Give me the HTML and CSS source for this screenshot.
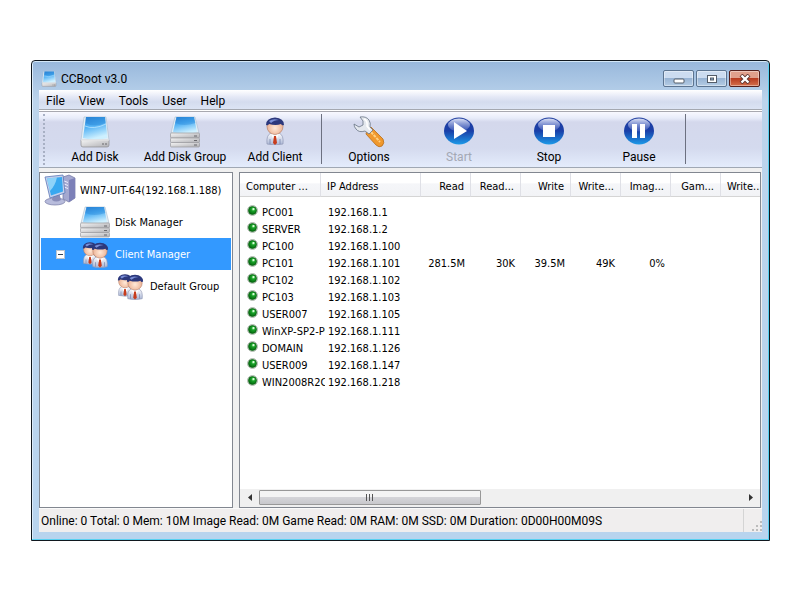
FILE: index.html
```
<!DOCTYPE html>
<html lang="en">
<head>
    <meta charset="utf-8">
    <title>CCBoot v3.0</title>
    <link rel="stylesheet" href="styles.css">
</head>
<body>
    <!-- shared icons -->
    <svg class="defs" width="0" height="0" aria-hidden="true">
        <defs>
            <linearGradient id="glass" x1="0" y1="0" x2="0.3" y2="1">
                <stop offset="0" stop-color="#2b84d8"/>
                <stop offset="0.45" stop-color="#4fb0f4"/>
                <stop offset="1" stop-color="#cdf0ff"/>
            </linearGradient>
            <linearGradient id="metal" x1="0" y1="0" x2="1" y2="1">
                <stop offset="0" stop-color="#f4f4f4"/>
                <stop offset="1" stop-color="#b0b0b4"/>
            </linearGradient>
            <linearGradient id="ball" x1="0" y1="0" x2="0" y2="1">
                <stop offset="0" stop-color="#2440a0"/>
                <stop offset="0.5" stop-color="#1a3fa8"/>
                <stop offset="1" stop-color="#1c9ae8"/>
            </linearGradient>
            <linearGradient id="shine" x1="0" y1="0" x2="0" y2="1">
                <stop offset="0" stop-color="#f0f4ff" stop-opacity="0.9"/>
                <stop offset="1" stop-color="#8090d8" stop-opacity="0.3"/>
            </linearGradient>
            <radialGradient id="face" cx="0.5" cy="0.6" r="0.6">
                <stop offset="0" stop-color="#ffe9d8"/>
                <stop offset="1" stop-color="#e8a888"/>
            </radialGradient>
            <linearGradient id="shirt" x1="0" y1="0" x2="0" y2="1">
                <stop offset="0" stop-color="#ffffff"/>
                <stop offset="1" stop-color="#a8b4d4"/>
            </linearGradient>
            <radialGradient id="led" cx="0.6" cy="0.35" r="0.6">
                <stop offset="0" stop-color="#a0f0a0"/>
                <stop offset="0.4" stop-color="#18a028"/>
                <stop offset="1" stop-color="#067010"/>
            </radialGradient>
            <symbol id="disk" viewBox="0 0 32 32">
                <path d="M5 1H27L30 24H2Z" fill="#e4eef6" stroke="#a8bccc" stroke-width="0.6"/>
                <path d="M7 1H26L28.500 22Q16 25 4 22Z" fill="url(#glass)"/>
                <path d="M6.500 7Q16 12 26.500 7L26 1H7Z" fill="#1c78cc" opacity="0.35"/>
                <path d="M6 10Q15 14 27 8" fill="none" stroke="#b8e4ff" stroke-width="0.8"/>
                <path d="M2 24H30V29Q30 31 28 31H4Q2 31 2 29Z" fill="url(#metal)" stroke="#8c8c90" stroke-width="0.7"/>
                <path d="M2 24H30" stroke="#fff"/>
                <path d="M24 27V29M27 27V29" stroke="#68686c"/>
            </symbol>
            <symbol id="disks" viewBox="0 0 32 32">
                <path d="M6 1H26L30 17H2Z" fill="#e4eef6" stroke="#a8bccc" stroke-width="0.6"/>
                <path d="M7.500 1H25L28 16Q16 20 4 16Z" fill="url(#glass)"/>
                <path d="M6 7Q15 11 26.500 7L25 1H7.500Z" fill="#1c78cc" opacity="0.3"/>
                <rect x="1.500" y="17" width="29" height="5" rx="1" fill="url(#metal)" stroke="#98989c" stroke-width="0.7"/>
                <rect x="1.500" y="22" width="29" height="4.500" rx="1" fill="url(#metal)" stroke="#98989c" stroke-width="0.7"/>
                <rect x="1.500" y="26.500" width="29" height="4.500" rx="1" fill="url(#metal)" stroke="#98989c" stroke-width="0.7"/>
                <path d="M25 20H28M25 24.500H28M25 29H28" stroke="#68686c"/>
            </symbol>
            <symbol id="user" viewBox="0 0 20 28">
                <path d="M2 27Q1 18 6 16H14Q19 18 18 27Q10 29 2 27Z" fill="url(#shirt)" stroke="#9098b4" stroke-width="0.7"/>
                <path d="M5 27V22M15 27V22" stroke="#7c88ac" stroke-width="0.8"/>
                <circle cx="10" cy="9.500" r="8" fill="url(#face)" stroke="#b07860" stroke-width="0.6"/>
                <path d="M1 8Q1 1 10 0.500Q19 1 19 8Q17 9 16 7Q11 9 4 7Q3 9 1 8Z" fill="#2c387c"/>
                <path d="M4 4Q8 1 14 3Q9 3 6 6Z" fill="#7c90d8"/>
                <path d="M6.500 17L10 19L13.500 17L12 22L10 20L8 22Z" fill="#fff"/>
                <path d="M9 19H11L12 26L10 28L8 26Z" fill="#c83c1c"/>
            </symbol>
            <symbol id="users" viewBox="0 0 32 32">
                <use href="#user" x="3" y="3" width="16" height="24"/>
                <use href="#user" x="12" y="4" width="18" height="26"/>
            </symbol>
            <symbol id="led-on" viewBox="0 0 11 11">
                <circle cx="5.500" cy="5.500" r="5" fill="#dde6dd" stroke="#a0aca0" stroke-width="0.8"/>
                <circle cx="5.500" cy="5.500" r="4" fill="url(#led)" stroke="#075c10" stroke-width="0.7"/>
                <circle cx="6.500" cy="4" r="1" fill="#e0ffe0"/>
            </symbol>
            <symbol id="round" viewBox="0 0 30 28">
                <ellipse cx="15" cy="14" rx="15" ry="13.500" fill="url(#ball)"/>
                <ellipse cx="15" cy="8" rx="11" ry="6.500" fill="url(#shine)"/>
            </symbol>
        </defs>
    </svg>

    <div class="window">
        <header class="titlebar">
            <svg class="app-icon"><use href="#disk"/></svg>
            <h1>CCBoot v3.0</h1>
            <div class="window-buttons">
                <button class="win-btn" aria-label="Minimize">
                    <svg width="12" height="10"><rect x="1" y="5" width="10" height="4" rx="1" fill="#fff" stroke="#535c68"/></svg>
                </button>
                <button class="win-btn" aria-label="Maximize">
                    <svg width="12" height="10"><rect x="1.500" y="1.500" width="9" height="7" fill="#fff" stroke="#535c68"/><rect x="4.500" y="4" width="3" height="2" fill="#8caccc" stroke="#535c68"/></svg>
                </button>
                <button class="win-btn close" aria-label="Close">
                    <svg width="12" height="10"><path d="M2 1L10 9M10 1L2 9" stroke="#5c3430" stroke-width="4"/><path d="M2.500 1.500L9.500 8.500M9.500 1.500L2.500 8.500" stroke="#fff" stroke-width="2.400"/></svg>
                </button>
            </div>
        </header>

        <nav class="menubar">
            <button>File</button>
            <button>View</button>
            <button>Tools</button>
            <button>User</button>
            <button>Help</button>
        </nav>

        <div class="toolbar">
            <button class="tool"><svg><use href="#disk"/></svg>Add Disk</button>
            <button class="tool"><svg><use href="#disks"/></svg>Add Disk Group</button>
            <button class="tool"><svg><use href="#user" x="5" y="1" width="22" height="28"/></svg>Add Client</button>
            <span class="divider"></span>
            <button class="tool">
                <svg viewBox="0 0 32 32">
                    <path d="M14 14L18 11L30 23Q32 27 29 30Q26 32 23 29L13 18Z" fill="#f0982c" stroke="#b86c18" stroke-width="0.8"/>
                    <path d="M18 16L27 26" stroke="#ffd080" stroke-width="2" stroke-dasharray="3 1"/>
                    <path d="M7 1Q13 0 16 4Q18 7 17 11L20 14L16 18L12 15Q6 17 3 13Q1 11 1 8L6 11L10 9V5Z" fill="#e4e8ee" stroke="#687484" stroke-width="0.8"/>
                    <path d="M11 3Q15 5 14 10L17 14" fill="none" stroke="#fff" stroke-width="1.500"/>
                </svg>
                Options
            </button>
            <button class="tool" disabled>
                <svg viewBox="0 0 32 32"><use href="#round" x="1" y="1" width="30" height="28"/><path d="M11 6L24 15L11 23Z" fill="#fff"/></svg>
                Start
            </button>
            <button class="tool">
                <svg viewBox="0 0 32 32"><use href="#round" x="1" y="1" width="30" height="28"/><rect x="10" y="9" width="12" height="12" fill="#fff"/></svg>
                Stop
            </button>
            <button class="tool">
                <svg viewBox="0 0 32 32"><use href="#round" x="1" y="1" width="30" height="28"/><path d="M9 8H14V22H9ZM17 8H22V22H17Z" fill="#fff"/></svg>
                Pause
            </button>
            <span class="divider"></span>
        </div>

        <main class="content">
            <aside class="tree">
                <div class="node root">
                    <svg viewBox="0 0 32 32">
                        <path d="M19 3L25 1L31 4V24L25 28L19 25Z" fill="#a4a8d0" stroke="#6c70a0" stroke-width="0.7"/>
                        <path d="M25 6L31 4V24L25 28Z" fill="#7c80b8"/>
                        <path d="M20 7L24 8.500M20 10L24 11.500M20 13L24 14.500" stroke="#eef"/>
                        <ellipse cx="11" cy="27.500" rx="10" ry="3.500" fill="#b8bcdc" stroke="#7478a4" stroke-width="0.7"/>
                        <path d="M9 20L15 18L17 26Q12 29 8 26Z" fill="#888cb8"/>
                        <path d="M1 3L19 1L21 19L6 24Z" fill="#c4d0ec" stroke="#5c78b8" stroke-width="0.8"/>
                        <path d="M3 4.500L18 3L19 17.500L7 21.500Z" fill="#38a8f0"/>
                        <path d="M3 4.500L13 3.500Q11 12 6 17Z" fill="#c8f0ff" opacity="0.6"/>
                    </svg>
                    WIN7-UIT-64(192.168.1.188)
                </div>
                <ul>
                    <li>
                        <div class="node level1"><svg><use href="#disks"/></svg>Disk Manager</div>
                    </li>
                    <li>
                        <div class="node level1 selected">
                            <button class="toggle" aria-label="Collapse"></button>
                            <svg><use href="#users"/></svg>Client Manager
                        </div>
                        <ul>
                            <li><div class="node level2"><svg><use href="#users"/></svg>Default Group</div></li>
                        </ul>
                    </li>
                </ul>
            </aside>

            <section class="clients">
                <div class="table-wrap">
                    <table>
                        <colgroup>
                            <col class="col-name"><col class="col-ip"><col><col><col><col><col><col><col>
                        </colgroup>
                        <thead>
                            <tr>
                                <th>Computer ...</th>
                                <th>IP Address</th>
                                <th class="num">Read</th>
                                <th class="num">Read...</th>
                                <th class="num">Write</th>
                                <th class="num">Write...</th>
                                <th class="num">Imag...</th>
                                <th class="num">Gam...</th>
                                <th>Write...</th>
                            </tr>
                        </thead>
                        <tbody>
                            <tr><td><span class="name"><svg><use href="#led-on"/></svg>PC001</span></td><td>192.168.1.1</td></tr>
                            <tr><td><span class="name"><svg><use href="#led-on"/></svg>SERVER</span></td><td>192.168.1.2</td></tr>
                            <tr><td><span class="name"><svg><use href="#led-on"/></svg>PC100</span></td><td>192.168.1.100</td></tr>
                            <tr>
                                <td><span class="name"><svg><use href="#led-on"/></svg>PC101</span></td>
                                <td>192.168.1.101</td>
                                <td class="num">281.5M</td>
                                <td class="num">30K</td>
                                <td class="num">39.5M</td>
                                <td class="num">49K</td>
                                <td class="num">0%</td>
                            </tr>
                            <tr><td><span class="name"><svg><use href="#led-on"/></svg>PC102</span></td><td>192.168.1.102</td></tr>
                            <tr><td><span class="name"><svg><use href="#led-on"/></svg>PC103</span></td><td>192.168.1.103</td></tr>
                            <tr><td><span class="name"><svg><use href="#led-on"/></svg>USER007</span></td><td>192.168.1.105</td></tr>
                            <tr><td><span class="name"><svg><use href="#led-on"/></svg>WinXP-SP2-PC</span></td><td>192.168.1.111</td></tr>
                            <tr><td><span class="name"><svg><use href="#led-on"/></svg>DOMAIN</span></td><td>192.168.1.126</td></tr>
                            <tr><td><span class="name"><svg><use href="#led-on"/></svg>USER009</span></td><td>192.168.1.147</td></tr>
                            <tr><td><span class="name"><svg><use href="#led-on"/></svg>WIN2008R2C</span></td><td>192.168.1.218</td></tr>
                        </tbody>
                    </table>
                </div>
                <div class="scrollbar">
                    <button aria-label="Scroll left"><svg width="4" height="7"><path d="M4 0V7L0 3.500Z" fill="#333"/></svg></button>
                    <div class="track"><div class="thumb"><i></i><i></i><i></i></div></div>
                    <button aria-label="Scroll right"><svg width="4" height="7"><path d="M0 0V7L4 3.500Z" fill="#333"/></svg></button>
                </div>
            </section>
        </main>

        <footer class="statusbar">
            <span class="status-text">Online: 0 Total: 0 Mem: 10M Image Read: 0M Game Read: 0M RAM: 0M SSD: 0M Duration: 0D00H00M09S</span>
            <svg class="grip" width="10" height="10"><path d="M8 0h2v2h-2zM4 4h2v2h-2zM8 4h2v2h-2zM0 8h2v2h-2zM4 8h2v2h-2zM8 8h2v2h-2z" fill="#bcbcbc"/></svg>
        </footer>
    </div>
</body>
</html>
```

FILE: styles.css
```
* { box-sizing: border-box; }

body {
    margin: 0;
    padding: 60px 30px 59px 31px;
    min-height: 100vh;
    display: flex;
    background: #fff;
    color: #000;
    font: 12px/16px Roboto, "Segoe UI", sans-serif;
}

button { margin: 0; padding: 0; border: none; background: none; font: inherit; color: inherit; }
svg { display: block; flex: none; }
ul { list-style: none; margin: 0; padding: 0; }
.defs { position: absolute; }

/* window frame */
.window {
    flex: 1;
    min-width: 0;
    display: flex;
    flex-direction: column;
    padding: 0 7px 8px 7px;
    border: 1px solid #10181f;
    border-radius: 4px 4px 0 0;
    background: linear-gradient(#98b8dc, #bcd4ec 40px, #b8d4ee);
    box-shadow: inset 0 1px #d4e8f8, inset -1px -1px #58d0f0, inset 1px 0 #dcecfa;
}

.titlebar { display: flex; align-items: center; height: 29px; padding: 6px 2px 0; }
.titlebar h1 { flex: 1; margin: 0; font-size: 12px; font-weight: normal; }
.app-icon { width: 16px; height: 16px; margin-right: 4px; }
.window-buttons { display: flex; gap: 2px; }
.win-btn {
    display: flex;
    align-items: center;
    justify-content: center;
    width: 31px;
    height: 17px;
    border: 1px solid #5c7490;
    border-radius: 2px;
    background: linear-gradient(#ccdcf0 45%, #98b4d4 50%, #b4cce4);
    box-shadow: inset 0 0 0 1px rgba(255, 255, 255, .4);
}
.win-btn.close {
    border-color: #54201c;
    background: linear-gradient(#e0a08c 45%, #b83c20 50%, #d4704c);
}

/* menu and toolbar */
.menubar {
    display: flex;
    gap: 14px;
    padding: 2px 7px 0;
    height: 19px;
    background: linear-gradient(#fff, #e4e8f6 7px, #d4dcee 12px, #dce4f4);
}
.toolbar {
    display: flex;
    height: 59px;
    padding: 2px 0 0 4px;
    border-top: 1px solid #a4a8b0;
    border-bottom: 1px solid #a0a8b4;
    background: linear-gradient(#fff 1px, #a8a8b0 1px, #a8a8b0 2px, #f8f8ff 2px, #e8ecfa 8px, #d4d8ec 12px, #d4daee 38px, #e4ecfc);
}
.toolbar::before { content: ""; width: 3px; margin: 2px 2px 2px 0; border-left: 2px dotted #a8b0c4; }
.tool { display: flex; flex-direction: column; align-items: center; width: 90px; padding-top: 4px; white-space: nowrap; }
.tool svg { width: 32px; height: 32px; margin-bottom: 1px; }
.tool:disabled { color: #a4a8b4; }
.divider { width: 1px; height: 50px; margin: 2px 2px 0 1px; background: #6c7080; }

/* main area */
.content {
    flex: 1;
    display: flex;
    gap: 6px;
    min-height: 0;
    padding: 4px 1px 0 0;
    background: #f0f0f0;
    font: 11px/17px "DejaVu Sans Condensed", Tahoma, sans-serif;
}
.tree { width: 194px; padding-top: 1px; border: 1px solid #828790; background: #fff; }
.node { display: flex; align-items: center; height: 32px; margin: 0 1px; white-space: nowrap; }
.node svg { width: 32px; height: 32px; margin-right: 4px; }
.root { padding-left: 3px; }
.level1 { padding-left: 38px; }
.level2 { padding-left: 73px; }
.selected { padding-left: 15px; background: #3399ff; color: #fff; }
.toggle {
    width: 9px;
    height: 9px;
    margin-right: 14px;
    border: 1px solid #b8c4d0;
    background: linear-gradient(#345, #345) center / 5px 1px no-repeat #fff;
}

.clients { flex: 1; min-width: 0; display: flex; flex-direction: column; border: 1px solid #828790; background: #fff; }
.table-wrap { flex: 1; overflow: hidden; }
table { width: 531px; table-layout: fixed; border-collapse: separate; border-spacing: 0; white-space: nowrap; }
col { width: 50px; }
.col-name { width: 81px; }
.col-ip { width: 100px; }
th {
    height: 24px;
    padding: 4px 6px 0;
    border-right: 1px solid #dfe0e6;
    border-bottom: 1px solid #d5d5d5;
    background: linear-gradient(#fff 45%, #f5f6f9 46%, #f2f3f6);
    font-weight: normal;
    text-align: left;
}
td { height: 17px; padding: 0 6px 0 7px; }
tbody::before { content: ""; display: table-row; height: 7px; }
.num { text-align: right; }
.name { display: flex; width: 78px; overflow: hidden; }
.name svg { width: 11px; height: 11px; margin: 1px 4px 0 0; }

.scrollbar { display: flex; height: 18px; padding-bottom: 1px; background: #f0f0f0; }
.scrollbar button { display: flex; align-items: center; justify-content: center; width: 19px; }
.track { flex: 1; padding: 1px 0; }
.thumb {
    display: flex;
    align-items: center;
    justify-content: center;
    gap: 2px;
    width: 46%;
    height: 15px;
    border: 1px solid #989898;
    border-radius: 1px;
    background: linear-gradient(#f4f4f4 45%, #d4d4d8 50%, #c8c8cc);
}
.thumb i { width: 1px; height: 7px; background: #555; }

.statusbar { display: flex; align-items: center; height: 24px; border-top: 1px solid #fafafa; background: #f0eeee; }
.status-text { flex: 1; padding-left: 2px; white-space: nowrap; }
.grip { align-self: stretch; width: 19px; height: 23px; padding: 12px 0 0 8px; border-left: 1px solid #d4d4d4; }
```
